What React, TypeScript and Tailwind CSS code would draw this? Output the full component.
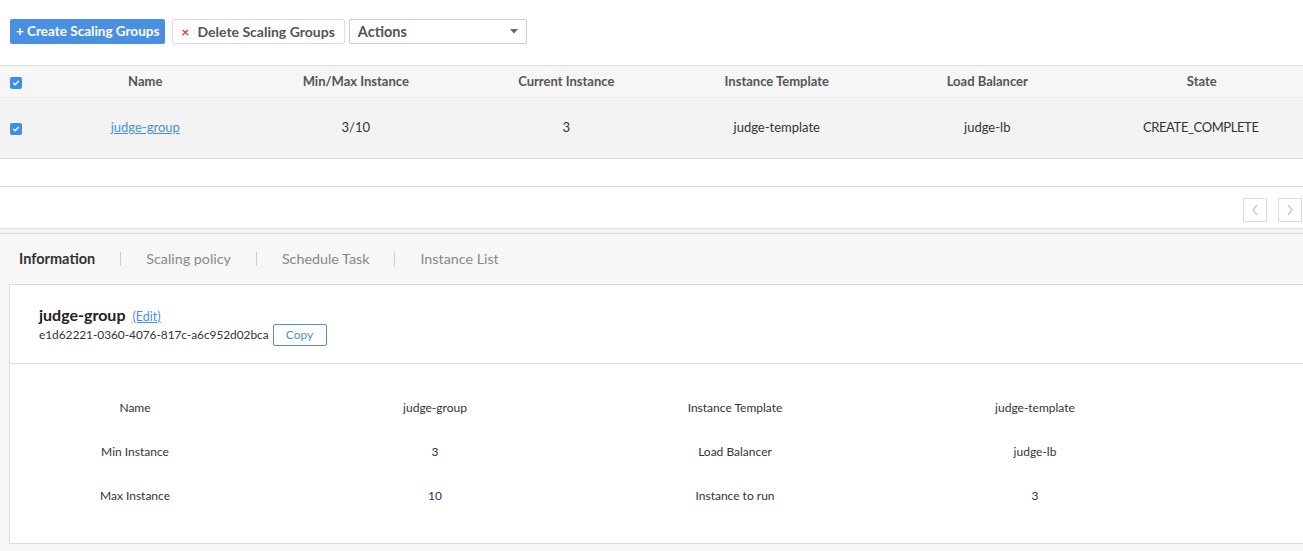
import React from "react";

const font = { fontFamily: "Lato, 'Liberation Sans', sans-serif" };

function Check() {
  return (
    <span className="inline-flex h-[12px] w-[12px] items-center justify-center rounded-[2px] bg-[#3d8ee8]">
      <svg width="8" height="8" viewBox="0 0 8 8">
        <path d="M1.5 4.2 L3.2 5.8 L6.5 2.2" stroke="white" strokeWidth="1.4" fill="none" strokeLinecap="round" strokeLinejoin="round" />
      </svg>
    </span>
  );
}

export default function App() {
  const headers = ["Name", "Min/Max Instance", "Current Instance", "Instance Template", "Load Balancer", "State"];
  return (
    <div className="h-[551px] w-[1303px] overflow-hidden bg-[#f7f7f7] text-[#333]" style={font}>
      {/* toolbar */}
      <div className="flex h-[65px] items-start bg-white px-[10px] pt-[19px]">
        <button className="flex h-[25px] items-center rounded-[2px] bg-[#4a90e2] px-[6px] text-[13.5px] font-bold text-white">
          + Create Scaling Groups
        </button>
        <button className="ml-[7px] flex h-[25px] items-center gap-[8px] rounded-[2px] border border-[#ddd] bg-white pl-[8px] pr-[9px] text-[14px] font-bold text-[#555]">
          <span className="text-[14px] font-bold text-[#e53935]">×</span>
          Delete Scaling Groups
        </button>
        <div className="ml-[4px] flex h-[25px] w-[178px] items-center justify-between rounded-[2px] border border-[#ccc] bg-white pl-[8px] pr-[8px] text-[14.5px] font-bold text-[#555]">
          <span>Actions</span>
          <svg width="8" height="5" viewBox="0 0 8 5"><path d="M0 0 L8 0 L4 4.5 Z" fill="#666" /></svg>
        </div>
      </div>

      {/* table */}
      <div className="border-t border-[#ddd] bg-white">
        <div className="grid h-[32px] grid-cols-[40px_repeat(6,1fr)] items-center border-b border-[#eee] bg-[#f6f6f6] text-[13px] font-bold text-[#555]">
          <div className="pl-[10px] pt-[2px]"><Check /></div>
          {headers.map((h) => (
            <div key={h} className={h === "State" ? "pl-[8px] text-center" : "text-center"}>{h}</div>
          ))}
        </div>
        <div className="grid h-[61px] grid-cols-[40px_repeat(6,1fr)] items-center border-b border-[#ddd] bg-[#f3f3f3] text-[13px] text-[#333]">
          <div className="pl-[10px] pt-[2px]"><Check /></div>
          <div className="text-center"><span className="text-[#4a90e2] underline">judge-group</span></div>
          <div className="text-center">3/10</div>
          <div className="text-center">3</div>
          <div className="text-center">judge-template</div>
          <div className="text-center">judge-lb</div>
          <div className="pl-[6px] text-center tracking-[-0.4px]">CREATE_COMPLETE</div>
        </div>
        <div className="h-[28px] border-b border-[#ddd] bg-white" />
        <div className="flex h-[42px] items-start justify-end gap-[11px] border-b border-[#ddd] bg-white pr-[1px] pt-[11px]">
          <div className="flex h-[24px] w-[24px] items-center justify-center border border-[#ddd]">
            <svg width="8" height="12" viewBox="0 0 8 12"><path d="M6 1 L2 6 L6 11" stroke="#ccc" strokeWidth="1.5" fill="none" /></svg>
          </div>
          <div className="flex h-[24px] w-[24px] items-center justify-center border border-[#ddd]">
            <svg width="8" height="12" viewBox="0 0 8 12"><path d="M2 1 L6 6 L2 11" stroke="#ccc" strokeWidth="1.5" fill="none" /></svg>
          </div>
        </div>
      </div>
      <div className="h-[4px] bg-[#f4f4f4]" />

      {/* lower */}
      <div className="border-t border-[#ddd] bg-[#f7f7f7]">
        <div className="flex h-[50px] items-center pl-[19px] text-[14.3px]">
          <span className="text-[14.5px] font-bold text-[#333]">Information</span>
          <span className="mx-[25px] h-[14px] w-px bg-[#ccc]" />
          <span className="text-[#888]">Scaling policy</span>
          <span className="mx-[25px] h-[14px] w-px bg-[#ccc]" />
          <span className="text-[#888]">Schedule Task</span>
          <span className="mx-[25px] h-[14px] w-px bg-[#ccc]" />
          <span className="text-[#888]">Instance List</span>
        </div>
        <div className="ml-[9px] border-b border-l border-t border-[#ddd] bg-white">
          <div className="border-b border-[#ddd] px-[29px] pb-[17px] pt-[18px]">
            <div className="flex items-baseline gap-[7px]">
              <span className="text-[16px] font-bold text-[#222]">judge-group</span>
              <span className="text-[12.5px] text-[#4a90e2] underline">(Edit)</span>
            </div>
            <div className="-mt-[3px] flex items-center gap-[4px]">
              <span className="text-[11.9px] tracking-[-0.05px] text-[#333]">e1d62221-0360-4076-817c-a6c952d02bca</span>
              <button className="flex h-[22px] w-[54px] items-center justify-center rounded-[2px] border border-[#4a90e2] text-[12px] text-[#4a90e2]">
                Copy
              </button>
            </div>
          </div>
          <div className="grid grid-cols-[250px_350px_250px_350px] pb-[25px] pt-[22px] text-[12px] text-[#333]">
            {[
              ["Name", "judge-group", "Instance Template", "judge-template"],
              ["Min Instance", "3", "Load Balancer", "judge-lb"],
              ["Max Instance", "10", "Instance to run", "3"],
            ].map((row, i) =>
              row.map((c, j) => (
                <div key={`${i}-${j}`} className="flex h-[44px] items-center justify-center">
                  {c}
                </div>
              ))
            )}
          </div>
        </div>
      </div>
    </div>
  );
}
